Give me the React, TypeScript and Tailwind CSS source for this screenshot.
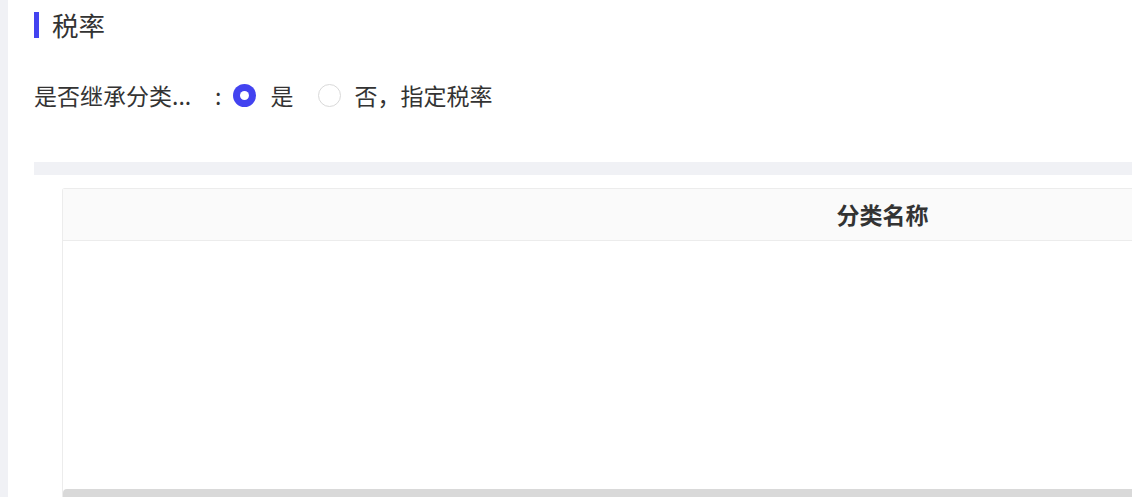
export default function App() {
  const font = { fontFamily: '"Noto Sans CJK SC", "Noto Sans", sans-serif' };
  return (
    <div className="flex h-[497px] w-[1132px] overflow-hidden bg-white text-[#333]" style={font}>
      <div className="w-[8px] shrink-0 bg-[#f0f1f5]" />
      <div className="flex min-w-0 flex-1 flex-col pl-[26px]">
        {/* section title */}
        <div className="mt-[12px] flex h-[26px] items-center gap-[13px]">
          <span className="h-[26px] w-[5px] bg-[#4343f0]" />
          <span className="text-[26.5px] leading-[26px] text-[#333]">税率</span>
        </div>

        {/* inherit radio row */}
        <div className="mt-[44px] flex h-[26px] items-center text-[23px] leading-[26px]">
          <span className="w-[180px] whitespace-nowrap">是否继承分类...</span>
          <span className="ml-[1px] mr-[12px]">:</span>
          <label className="flex items-center">
            <span className="flex h-[23px] w-[23px] items-center justify-center rounded-full bg-[#4343f0]">
              <span className="h-[9px] w-[9px] rounded-full bg-white" />
            </span>
            <span className="ml-[14px]">是</span>
          </label>
          <label className="ml-[25px] flex items-center">
            <span className="h-[23px] w-[23px] rounded-full border border-[#d9d9d9] bg-white" />
            <span className="ml-[13px]">否，指定税率</span>
          </label>
        </div>

        <div className="mt-[54px] h-[13px] w-full shrink-0 bg-[#f0f1f5]" />

        {/* category table */}
        <div className="ml-[28px] mt-[13px] flex w-[1640px] flex-1 flex-col rounded-tl-[3px] border-l border-t border-[#ececec]">
          <div className="flex h-[52px] shrink-0 items-center justify-center border-b border-[#ececec] bg-[#fafafa] text-[23px] font-bold text-[#333]">
            分类名称
          </div>
          <div className="flex-1 bg-white" />
          <div className="h-[8px] shrink-0 rounded-tl-[4px] bg-[#d9d9d9]" />
        </div>
      </div>
    </div>
  );
}
